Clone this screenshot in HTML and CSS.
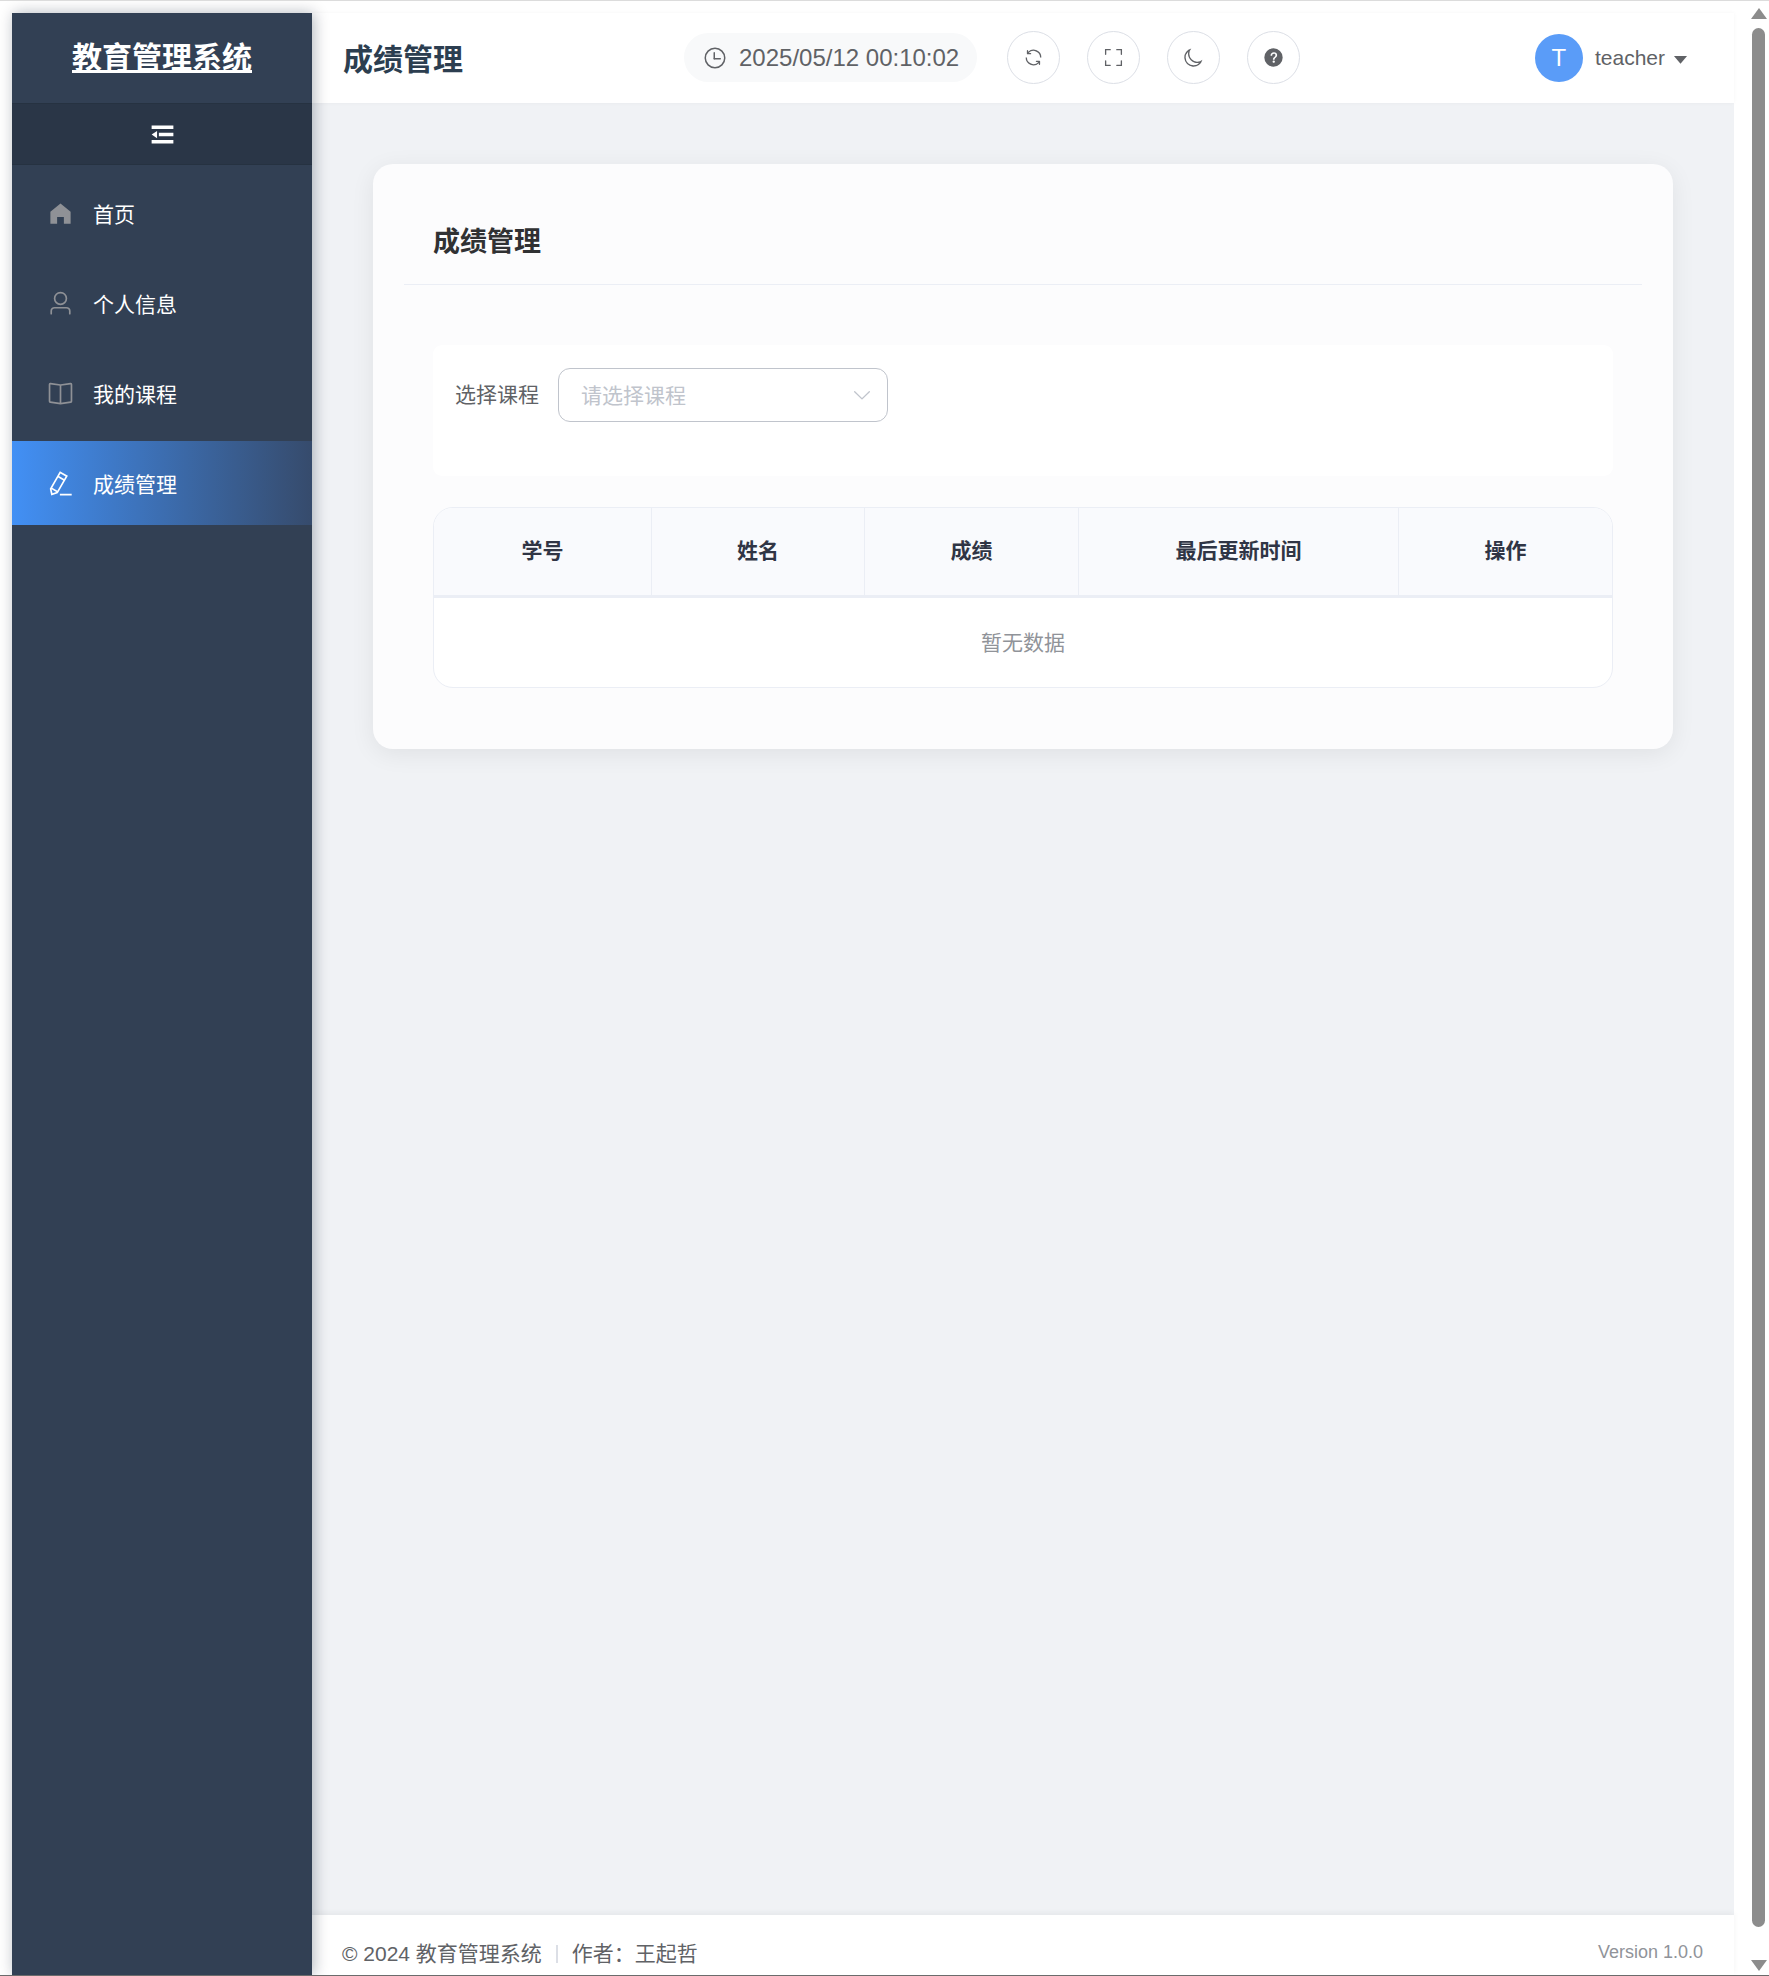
FILE: index.html
```html
<!DOCTYPE html>
<html lang="zh-CN">
<head>
<meta charset="utf-8">
<title>成绩管理 - 教育管理系统</title>
<link rel="stylesheet" href="styles.css">
</head>
<body>
<div class="window">
  <div class="app">
    <aside class="sidebar">
      <div class="logo"><a class="logo-link" href="#">教育管理系统</a></div>
      <div class="toggle">
        <svg class="ico-fold" viewBox="0 0 1024 1024"><path fill="currentColor" d="M896 192H128v128h768V192zm0 256H384v128h512V448zm0 256H128v128h768V704zM320 384 128 512l192 128V384z"/></svg>
      </div>
      <nav class="menu">
        <a class="menu-item" href="#">
          <span class="menu-icon"><svg class="ico-menu" viewBox="0 0 1024 1024"><path fill="currentColor" d="M512 128 128 447.936V896h255.936V640H640v256h255.936V447.936z"/></svg></span>
          <span>首页</span>
        </a>
        <a class="menu-item" href="#">
          <span class="menu-icon"><svg class="ico-menu" viewBox="0 0 1024 1024"><path fill="currentColor" d="M512 512a192 192 0 1 0 0-384 192 192 0 0 0 0 384zm0 64a256 256 0 1 1 0-512 256 256 0 0 1 0 512zm320 320v-96a96 96 0 0 0-96-96H288a96 96 0 0 0-96 96v96a32 32 0 1 1-64 0v-96a160 160 0 0 1 160-160h448a160 160 0 0 1 160 160v96a32 32 0 1 1-64 0z"/></svg></span>
          <span>个人信息</span>
        </a>
        <a class="menu-item" href="#">
          <span class="menu-icon"><svg class="ico-menu" viewBox="0 0 1024 1024"><path fill="currentColor" d="m512 863.36 384-54.848v-638.72L525.568 222.72a96 96 0 0 1-27.136 0L128 169.792v638.72l384 54.848zM137.024 106.432l370.432 52.928a32 32 0 0 0 9.088 0l370.432-52.928A64 64 0 0 1 960 169.792v638.72a64 64 0 0 1-54.976 63.36l-388.48 55.488a32 32 0 0 1-9.088 0l-388.48-55.488A64 64 0 0 1 64 808.512v-638.72a64 64 0 0 1 73.024-63.36z"/><path fill="currentColor" d="M480 192h64v704h-64z"/></svg></span>
          <span>我的课程</span>
        </a>
        <a class="menu-item is-active" href="#">
          <span class="menu-icon"><svg class="ico-menu" viewBox="0 0 1024 1024"><path fill="currentColor" d="m199.04 672.64 193.984 112 224-387.968-193.92-112-224 388.032zm-23.872 60.16 32.896 148.288 144.896-45.696L175.168 732.8zM455.04 229.248l193.92 112 56.704-98.112-193.984-112-56.64 98.112zM104.32 708.8l384-665.024 304.768 175.936L409.152 884.8h.064l-248.448 78.336L104.32 708.8zm384 254.272v-64h448v64h-448z"/></svg></span>
          <span>成绩管理</span>
        </a>
      </nav>
    </aside>
    <div class="main">
      <header class="topbar">
        <h1 class="page-title">成绩管理</h1>
        <div class="tools">
          <div class="clock">
            <svg class="ico-clock" viewBox="0 0 1024 1024"><path fill="currentColor" d="M512 896a384 384 0 1 0 0-768 384 384 0 0 0 0 768zm0 64a448 448 0 1 1 0-896 448 448 0 0 1 0 896z"/><path fill="currentColor" d="M480 256a32 32 0 0 1 32 32v256a32 32 0 0 1-64 0V288a32 32 0 0 1 32-32z"/><path fill="currentColor" d="M480 512h256q32 0 32 32t-32 32H480q-32 0-32-32t32-32z"/></svg>
            <span>2025/05/12 00:10:02</span>
          </div>
          <button class="round-btn" type="button"><svg class="ico-tool" viewBox="0 0 1024 1024"><path fill="currentColor" d="M771.776 794.88A384 384 0 0 1 128 512h64a320 320 0 0 0 555.712 216.448H654.72a32 32 0 1 1 0-64h149.056a32 32 0 0 1 32 32v148.928a32 32 0 1 1-64 0v-50.56zM276.288 295.616h92.992a32 32 0 0 1 0 64H220.16a32 32 0 0 1-32-32V178.56a32 32 0 0 1 64 0v50.56A384 384 0 0 1 896.128 512h-64a320 320 0 0 0-555.776-216.384z"/></svg></button>
          <button class="round-btn" type="button"><svg class="ico-tool" viewBox="0 0 1024 1024"><path fill="currentColor" d="m160 96.064 192 .192a32 32 0 0 1 0 64l-192-.192V352a32 32 0 0 1-64 0V96h64v.064zm0 831.872V928H96V672a32 32 0 1 1 64 0v191.936l192-.192a32 32 0 1 1 0 64l-192 .192zM864 96.064V96h64v256a32 32 0 1 1-64 0V160.064l-192 .192a32 32 0 1 1 0-64l192-.192zm0 831.872-192-.192a32 32 0 0 1 0-64l192 .192V672a32 32 0 1 1 64 0v256h-64v-.064z"/></svg></button>
          <button class="round-btn" type="button"><svg class="ico-tool" viewBox="0 0 1024 1024"><path fill="currentColor" d="M240.448 240.448a384 384 0 1 0 559.424 525.696 448 448 0 0 1-542.016-542.08 390.592 390.592 0 0 0-17.408 16.384zm181.056 362.048a384 384 0 0 0 525.632 16.384A448 448 0 1 1 405.056 76.8a384 384 0 0 0 16.448 525.696z"/></svg></button>
          <button class="round-btn" type="button"><svg class="ico-tool" viewBox="0 0 1024 1024"><path fill="currentColor" d="M512 64a448 448 0 1 1 0 896 448 448 0 0 1 0-896zm23.744 191.488c-52.096 0-92.928 14.784-123.2 44.352-30.976 29.568-45.76 70.4-45.76 122.496h80.256c0-29.568 5.632-52.8 17.6-68.992 13.376-19.712 35.2-28.864 66.176-28.864 23.936 0 42.944 6.336 56.32 19.712 12.672 13.376 19.712 31.68 19.712 54.912 0 17.6-6.336 34.496-19.008 49.984l-8.448 9.856c-45.76 40.832-73.216 70.4-82.368 89.408-9.856 19.008-14.08 42.24-14.08 68.992v9.856h80.96v-9.856c0-16.896 3.52-31.68 10.56-45.76 6.336-12.672 15.488-24.64 28.16-35.2 33.792-29.568 54.208-48.576 60.544-55.616 16.896-22.528 26.048-51.392 26.048-86.592 0-42.944-14.08-76.736-42.24-101.376-28.16-25.344-65.472-37.312-111.232-37.312zm-12.672 406.208a54.272 54.272 0 0 0-38.72 14.784 49.408 49.408 0 0 0-15.488 38.016c0 15.488 4.928 28.16 15.488 38.016A54.848 54.848 0 0 0 523.072 768c15.488 0 28.16-4.928 38.72-14.784a51.52 51.52 0 0 0 16.192-38.72 51.968 51.968 0 0 0-15.488-38.016 55.936 55.936 0 0 0-39.424-14.784z"/></svg></button>
        </div>
        <div class="user">
          <span class="avatar">T</span>
          <span class="user-name">teacher</span>
          <svg class="ico-caret" viewBox="0 0 1024 1024"><path fill="currentColor" d="m192 384 320 384 320-384z"/></svg>
        </div>
      </header>
      <main class="content">
        <section class="card">
          <div class="card-head"><h2 class="card-title">成绩管理</h2></div>
          <div class="card-body">
            <div class="filter">
              <span class="filter-label">选择课程</span>
              <div class="select">
                <span class="select-text">请选择课程</span>
                <svg class="ico-arrow" viewBox="0 0 1024 1024"><path fill="currentColor" d="M831.872 340.864 512 652.672 192.128 340.864a30.592 30.592 0 0 0-42.752 0 29.12 29.12 0 0 0 0 41.6L489.664 714.24a32 32 0 0 0 44.672 0l340.288-331.712a29.12 29.12 0 0 0 0-41.728 30.592 30.592 0 0 0-42.752 0z"/></svg>
              </div>
            </div>
            <div class="table-wrap">
              <table class="table">
                <colgroup>
                  <col class="col-id"><col class="col-name"><col class="col-score"><col class="col-time"><col>
                </colgroup>
                <thead>
                  <tr><th>学号</th><th>姓名</th><th>成绩</th><th>最后更新时间</th><th>操作</th></tr>
                </thead>
                <tbody>
                  <tr><td class="empty" colspan="5">暂无数据</td></tr>
                </tbody>
              </table>
            </div>
          </div>
        </section>
      </main>
      <footer class="footer">
        <div class="footer-left">
          <span>© 2024 教育管理系统</span>
          <span class="footer-sep"></span>
          <span>作者：王起哲</span>
        </div>
        <span class="footer-version">Version 1.0.0</span>
      </footer>
    </div>
  </div>
  <div class="scrollbar">
    <span class="arrow-up"></span>
    <span class="thumb"></span>
    <span class="arrow-down"></span>
  </div>
</div>
</body>
</html>
```

FILE: styles.css
```css
* { box-sizing: border-box; }
html, body { margin: 0; height: 100%; overflow: hidden; background: #fff; }
body { font-family: "Liberation Sans", "Noto Sans CJK SC", sans-serif; color: #606266; }
a { color: inherit; text-decoration: none; }
svg { display: block; flex: none; }

.window {
  display: flex;
  height: 1976px;
  border-top: 1px solid #dcdcdc;
  border-bottom: 1px solid #6b6b6b;
  overflow: hidden;
}
.app { flex: 1; min-width: 0; display: flex; padding: 12px 0 0 12px; }

/* sidebar */
.sidebar {
  width: 300px;
  flex: none;
  background: #324054;
  color: #fff;
  box-shadow: 2px 0 14px rgba(0, 21, 41, .3);
  position: relative;
  z-index: 2;
}
.logo { height: 90px; display: flex; justify-content: center; align-items: center; }
.logo-link { font-size: 30px; font-weight: 700; color: #fff; text-decoration: underline; line-height: 40px; }
.toggle {
  height: 62px;
  display: flex;
  align-items: center;
  justify-content: center;
  background: #2a3647;
  border-top: 1px solid #263241;
  border-bottom: 1px solid #263241;
}
.ico-fold { width: 29px; height: 29px; color: #fff; }
.menu { display: flex; flex-direction: column; gap: 6px; padding-top: 6px; }
.menu-item { height: 84px; display: flex; align-items: center; padding-left: 30px; font-size: 21px; color: #fff; }
.menu-icon { width: 36px; margin-right: 15px; display: flex; justify-content: center; color: #8f9196; }
.ico-menu { width: 27px; height: 27px; }
.menu-item.is-active { background: linear-gradient(90deg, #4290f5, #364b6c); }
.is-active .menu-icon { color: #fff; }

/* main */
.main { flex: 1; min-width: 0; display: flex; flex-direction: column; background: #f0f2f5; }
.topbar {
  height: 90px;
  flex: none;
  display: flex;
  align-items: center;
  background: #fff;
  padding: 0 43px 0 31px;
  box-shadow: 0 0 4px rgba(0, 0, 0, .04);
  position: relative;
  z-index: 1;
}
.page-title { margin: 4px 0 0; width: 120px; font-size: 30px; font-weight: 700; line-height: 40px; color: #2c3e50; }
.tools { display: flex; align-items: center; gap: 27px; margin-left: 221px; padding-bottom: 1px; }
.clock {
  height: 49px;
  width: 293px;
  margin-right: 3px;
  display: flex;
  align-items: center;
  gap: 12px;
  padding-left: 19px;
  border-radius: 25px;
  background: #f8f9fa;
  font-size: 24px;
  color: #606266;
}
.ico-clock { width: 24px; height: 24px; }
.round-btn {
  width: 53px;
  height: 53px;
  padding: 0;
  display: flex;
  align-items: center;
  justify-content: center;
  background: #fff;
  border: 1px solid #dcdfe6;
  border-radius: 50%;
  color: #606266;
}
.ico-tool { width: 21px; height: 21px; }
.user { margin-left: auto; display: flex; align-items: center; font-size: 21px; color: #606266; padding-bottom: 1px; }
.avatar {
  width: 48px;
  height: 48px;
  display: flex;
  align-items: center;
  justify-content: center;
  border-radius: 50%;
  background: #5a9cf8;
  color: #fff;
  font-size: 24px;
  margin-right: 12px;
}
.user-name { margin-right: 5px; }
.ico-caret { width: 21px; height: 21px; margin-top: 2px; }

/* content */
.content { flex: 1; min-height: 0; padding: 61px; }
.card {
  height: 585px;
  padding: 31px;
  background: #fcfcfd;
  border-radius: 20px;
  box-shadow: 0 5px 24px rgba(0, 0, 0, .07);
}
.card-head { height: 90px; padding: 0 29px; display: flex; align-items: center; border-bottom: 1px solid #ebeef5; }
.card-title { margin: 4px 0 0; font-size: 27px; font-weight: 700; line-height: 36px; color: #303133; }
.card-body { padding: 60px 29px 0; }
.filter {
  height: 131px;
  padding: 23px 22px 0;
  display: flex;
  align-items: flex-start;
  gap: 19px;
  background: #fff;
  border-radius: 9px;
}
.filter-label { font-size: 21px; line-height: 54px; color: #606266; }
.select {
  width: 330px;
  height: 54px;
  display: flex;
  align-items: center;
  justify-content: space-between;
  padding: 0 14px 2px 22px;
  background: #fff;
  border: 1px solid #c0c4cc;
  border-radius: 12px;
}
.select-text { font-size: 21px; color: #c0c4cc; }
.ico-arrow { width: 22px; height: 22px; margin-top: 2px; color: #c0c4cc; }

.table-wrap {
  margin-top: 31px;
  height: 181px;
  background: #fff;
  border: 1px solid #ebeef5;
  border-radius: 20px;
  overflow: hidden;
}
.table { width: 100%; border-collapse: separate; border-spacing: 0; table-layout: fixed; }
.col-id { width: 218px; }
.col-name { width: 213px; }
.col-score { width: 214px; }
.col-time { width: 320px; }
.table th {
  height: 90px;
  padding: 0 0 5px;
  background: #f9fafd;
  border-right: 1px solid #ebeef5;
  border-bottom: 3px solid #ebeef5;
  font-size: 21px;
  font-weight: 700;
  color: #303545;
}
.table th:last-child { border-right: 0; }
.empty { height: 89px; padding: 0 0 4px; text-align: center; font-size: 21px; color: #909399; }

/* footer */
.footer {
  height: 60px;
  flex: none;
  display: flex;
  justify-content: space-between;
  align-items: flex-start;
  padding: 25px 31px 0 30px;
  background: #fff;
  box-shadow: 0 -2px 6px rgba(0, 0, 0, .05);
  position: relative;
  z-index: 1;
}
.footer-left { display: flex; align-items: center; font-size: 21px; line-height: 28px; color: #606266; }
.footer-sep { width: 2px; height: 18px; margin: 0 14px 0 14px; background: #dcdfe6; }
.footer-version { font-size: 18px; line-height: 24px; color: #909399; }

/* window scrollbar */
.scrollbar {
  width: 35px;
  flex: none;
  display: flex;
  flex-direction: column;
  align-items: center;
  padding: 7px 0 4px 14px;
  background: #fff;
}
.arrow-up, .arrow-down { width: 0; height: 0; border-left: 8px solid transparent; border-right: 8px solid transparent; flex: none; }
.arrow-up { border-bottom: 11px solid #8c8c8c; margin-bottom: 9px; }
.arrow-down { border-top: 11px solid #8c8c8c; margin-top: auto; }
.thumb { width: 13px; height: 1899px; flex: none; border-radius: 7px; background: #8c8c8c; }
```
